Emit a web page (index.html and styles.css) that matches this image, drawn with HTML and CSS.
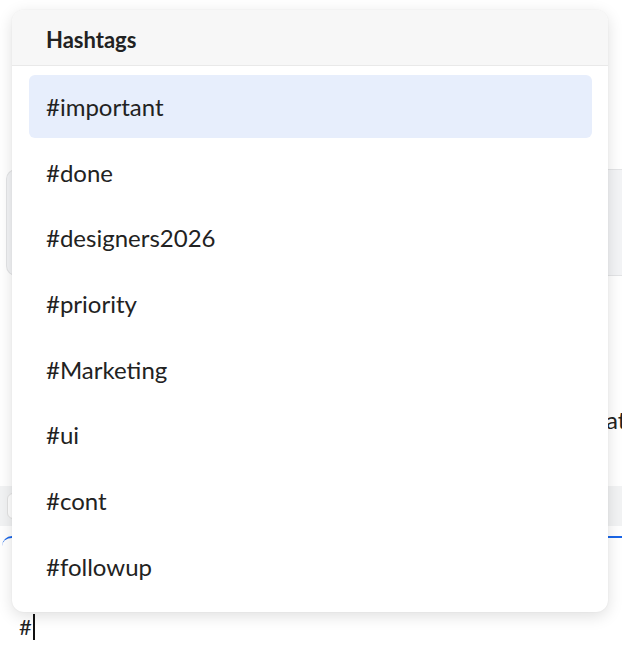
FILE: index.html
```html
<!DOCTYPE html>
<html lang="en">
<head>
    <meta charset="UTF-8">
    <meta name="viewport" content="width=device-width, initial-scale=1.0">
    <title>Compose</title>
    <link rel="stylesheet" href="styles.css">
</head>
<body>
    <div class="page">
        <div class="note-card"></div>

        <p class="note-text">at</p>

        <div class="toolbar">
            <div class="tool-button"></div>
        </div>

        <div class="composer">
            <span class="composer-text">#</span><span class="caret"></span>
        </div>
    </div>

    <!-- 해시태그 자동완성 -->
    <div class="suggest-popup">
        <div class="suggest-header">Hashtags</div>
        <ul class="suggest-list">
            <li class="suggest-item active">#important</li>
            <li class="suggest-item">#done</li>
            <li class="suggest-item">#designers2026</li>
            <li class="suggest-item">#priority</li>
            <li class="suggest-item">#Marketing</li>
            <li class="suggest-item">#ui</li>
            <li class="suggest-item">#cont</li>
            <li class="suggest-item">#followup</li>
        </ul>
    </div>
</body>
</html>
```

FILE: styles.css
```css
* {
    margin: 0;
    padding: 0;
    box-sizing: border-box;
    font-family: Lato, "Noto Sans", sans-serif;
}

body {
    background-color: white;
    width: 622px;
    height: 656px;
    overflow: hidden;
    position: relative;
    color: #222;
}

/* 배경 페이지 */
.page {
    padding-top: 169px;
}

.note-card {
    margin-left: 6px;
    height: 107px;
    background: #f3f4f6;
    border: 1px solid #e3e4e6;
    border-right: none;
    border-radius: 10px 0 0 10px;
}

.note-text {
    margin-top: 128px;
    padding-left: 606px;
    font-size: 24px;
    line-height: 32px;
    white-space: nowrap;
    overflow: hidden;
}

.toolbar {
    margin-top: 50px;
    height: 40px;
    background: #f2f3f4;
    display: flex;
    align-items: center;
    padding-left: 7px;
}

.tool-button {
    width: 40px;
    height: 26px;
    background: white;
    border: 1px solid #e2e2e2;
    border-radius: 6px;
}

.composer {
    margin-top: 10px;
    margin-left: 2px;
    height: 140px;
    border-top: 2px solid #1a66e8;
    border-radius: 10px 0 0 0;
    padding: 76px 0 0 17px;
    display: flex;
    align-items: flex-start;
}

.composer-text {
    font-size: 22px;
    line-height: 26px;
}

.caret {
    width: 2px;
    height: 26px;
    background: #111;
    margin-left: 1px;
}

/* 자동완성 팝업 */
.suggest-popup {
    position: absolute;
    top: 10px;
    left: 12px;
    width: 596px;
    height: 602px;
    background: white;
    border-radius: 12px;
    box-shadow: 0 4px 16px rgba(0, 0, 0, 0.13), 0 0 2px rgba(0, 0, 0, 0.06);
    overflow: hidden;
}

.suggest-header {
    height: 56px;
    padding: 4px 0 0 34px;
    background: #f7f7f7;
    border-bottom: 1px solid #e9e9e9;
    font-size: 22px;
    font-weight: bold;
    display: flex;
    align-items: center;
    color: #222;
}

.suggest-list {
    list-style: none;
    padding: 9px 16px 14px 17px;
    display: flex;
    flex-direction: column;
    gap: 2.7px;
}

.suggest-item {
    height: 63px;
    padding-left: 17px;
    display: flex;
    align-items: center;
    font-size: 24px;
    border-radius: 6px;
    color: #222;
}

.suggest-item.active {
    background: #e7eefc;
}
```
